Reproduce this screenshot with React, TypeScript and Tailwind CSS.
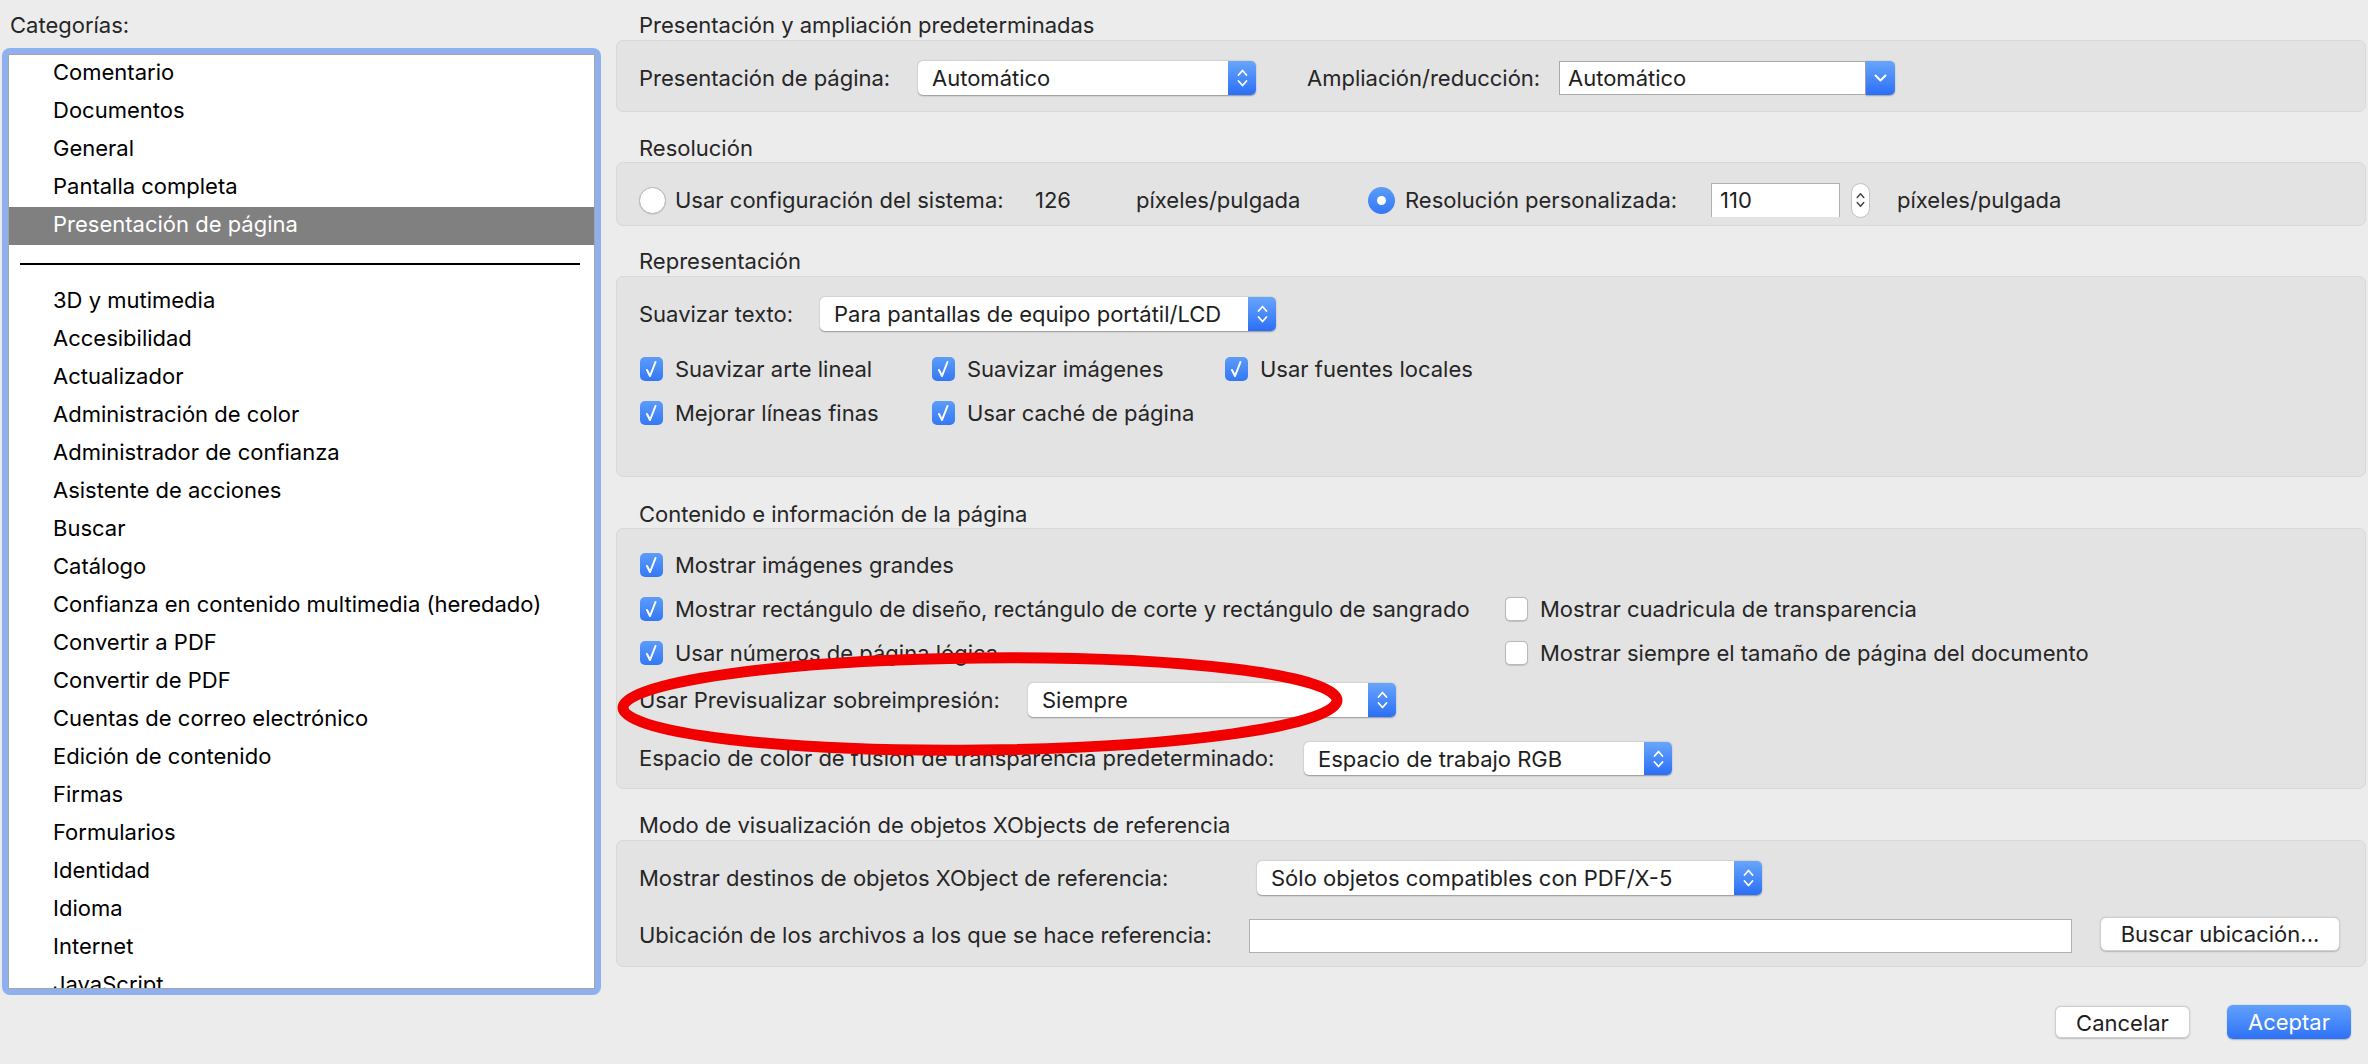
import React from 'react';

const categoriesTop = ['Comentario', 'Documentos', 'General', 'Pantalla completa', 'Presentación de página'];
const categoriesRest = [
  '3D y mutimedia',
  'Accesibilidad',
  'Actualizador',
  'Administración de color',
  'Administrador de confianza',
  'Asistente de acciones',
  'Buscar',
  'Catálogo',
  'Confianza en contenido multimedia (heredado)',
  'Convertir a PDF',
  'Convertir de PDF',
  'Cuentas de correo electrónico',
  'Edición de contenido',
  'Firmas',
  'Formularios',
  'Identidad',
  'Idioma',
  'Internet',
  'JavaScript',
];

function UpDown({ color = 'white', w = 11 }: { color?: string; w?: number }) {
  return (
    <svg width={w} height="20" viewBox="0 0 11 20" fill="none">
      <path d="M1.5 7 L5.5 2.5 L9.5 7" stroke={color} strokeWidth="1.8" strokeLinecap="round" strokeLinejoin="round" />
      <path d="M1.5 13 L5.5 17.5 L9.5 13" stroke={color} strokeWidth="1.8" strokeLinecap="round" strokeLinejoin="round" />
    </svg>
  );
}

function PopUp({ value, width, height = 34 }: { value: string; width: number; height?: number }) {
  return (
    <div
      className="flex shrink-0 rounded-[5px] bg-white shadow-[0_0.5px_1.5px_rgba(0,0,0,0.35)] overflow-hidden"
      style={{ width, height }}
    >
      <div className="flex-1 flex items-center pl-[14px] text-[22px] text-[#1e1e1e] leading-none">{value}</div>
      <div className="w-[28px] flex items-center justify-center bg-gradient-to-b from-[#68a5fb] to-[#2b6ef6]">
        <UpDown />
      </div>
    </div>
  );
}

function Combo({ value, width }: { value: string; width: number }) {
  return (
    <div className="flex shrink-0 h-[34px]" style={{ width }}>
      <div className="flex-1 flex items-center pl-[8px] bg-white border border-[#a9a9a9] text-[22px] text-[#1e1e1e] leading-none">
        {value}
      </div>
      <div className="w-[29px] flex items-center justify-center rounded-r-[5px] bg-gradient-to-b from-[#68a5fb] to-[#2b6ef6] shadow-[0_0.5px_1.5px_rgba(0,0,0,0.3)]">
        <svg width="13" height="8" viewBox="0 0 13 8" fill="none">
          <path d="M1.5 1.5 L6.5 6.5 L11.5 1.5" stroke="white" strokeWidth="2" strokeLinecap="round" strokeLinejoin="round" />
        </svg>
      </div>
    </div>
  );
}

function Check({ checked, label }: { checked: boolean; label: string }) {
  return (
    <div className="flex items-center h-[34px]">
      {checked ? (
        <div className="w-[23px] h-[24px] shrink-0 rounded-[5px] bg-gradient-to-b from-[#5c9cf9] to-[#3477f5] flex items-center justify-center">
          <svg width="23" height="24" viewBox="0 0 23 24" fill="none">
            <path d="M7 13 L10 19 L15.5 5" stroke="white" strokeWidth="2" strokeLinecap="round" strokeLinejoin="round" />
          </svg>
        </div>
      ) : (
        <div className="w-[23px] h-[24px] shrink-0 rounded-[5px] bg-white border border-[#b9b9b9] shadow-[0_0.5px_1px_rgba(0,0,0,0.15)]" />
      )}
      <span className="ml-[12px] whitespace-nowrap">{label}</span>
    </div>
  );
}

function Radio({ checked }: { checked: boolean }) {
  return checked ? (
    <div className="w-[27px] h-[27px] shrink-0 rounded-full bg-gradient-to-b from-[#5c9cf9] to-[#3477f5] flex items-center justify-center">
      <div className="w-[9px] h-[9px] rounded-full bg-white" />
    </div>
  ) : (
    <div className="w-[27px] h-[27px] shrink-0 rounded-full bg-white border border-[#b5b5b5] shadow-[0_0.5px_1px_rgba(0,0,0,0.15)]" />
  );
}

function Panel({ children, height, className = '' }: { children: React.ReactNode; height: number; className?: string }) {
  return (
    <div
      className={`rounded-[7px] bg-[#e3e3e3] border border-[#d8d8d8] pl-[22px] ${className}`}
      style={{ height }}
    >
      {children}
    </div>
  );
}

function Title({ text, h }: { text: string; h: number }) {
  return (
    <div className="pl-[23px] leading-[26px] whitespace-nowrap" style={{ height: h }}>
      {text}
    </div>
  );
}

export default function App() {
  return (
    <div className="relative w-[2368px] h-[1064px] overflow-hidden bg-[#ececec] text-[22px] text-[#262626] font-[Inter,'Liberation_Sans',sans-serif] flex">
      {/* categories */}
      <div className="w-[616px] shrink-0">
        <div className="pl-[10px] pt-[12px] leading-[26px] h-[48px]">Categorías:</div>
        <div className="ml-[2px] w-[599px] h-[947px] rounded-[8px] bg-[#8fb0ef] p-[6px]">
          <div className="h-full bg-white border border-[#a5a5a5] overflow-hidden text-black">
            {categoriesTop.map((c, i) => (
              <div
                key={c}
                className={`h-[38px] leading-[34px] pl-[44px] whitespace-nowrap ${
                  i === 4 ? 'bg-[#808080] text-white' : ''
                }`}
              >
                {c}
              </div>
            ))}
            <div className="h-[38px] flex items-center">
              <div className="ml-[11px] w-[560px] h-[2px] bg-black" />
            </div>
            {categoriesRest.map((c) => (
              <div key={c} className="h-[38px] leading-[34px] pl-[44px] whitespace-nowrap">
                {c}
              </div>
            ))}
          </div>
        </div>
      </div>

      {/* settings */}
      <div className="w-[1750px] shrink-0 pt-[12px]">
        <Title text="Presentación y ampliación predeterminadas" h={28} />
        <Panel height={72} className="pt-[20px]">
          <div className="flex items-center h-[34px]">
            <span className="w-[279px] shrink-0">Presentación de página:</span>
            <PopUp value="Automático" width={338} />
            <span className="ml-[51px] w-[252px] shrink-0">Ampliación/reducción:</span>
            <Combo value="Automático" width={336} />
          </div>
        </Panel>

        <div className="mt-[23px]">
          <Title text="Resolución" h={27} />
          <Panel height={64} className="pt-[20px]">
            <div className="flex items-center h-[34px] whitespace-nowrap">
              <Radio checked={false} />
              <span className="ml-[9px] w-[360px] shrink-0">Usar configuración del sistema:</span>
              <span className="w-[101px] shrink-0">126</span>
              <span className="w-[232px] shrink-0">píxeles/pulgada</span>
              <Radio checked />
              <span className="ml-[10px] w-[306px] shrink-0">Resolución personalizada:</span>
              <div className="w-[129px] h-[34px] shrink-0 bg-white border-t border-l border-r border-[#b0b0b0] flex items-center pl-[8px] text-[#1e1e1e]">
                110
              </div>
              <div className="ml-[11px] w-[19px] h-[35px] shrink-0 rounded-full bg-white border border-[#c2c2c2] flex items-center justify-center">
                <UpDown color="#444" w={9} />
              </div>
              <span className="ml-[27px]">píxeles/pulgada</span>
            </div>
          </Panel>
        </div>

        <div className="mt-[22px]">
          <Title text="Representación" h={28} />
          <Panel height={201} className="pt-[20px]">
            <div className="flex items-center h-[34px]">
              <span className="w-[181px] shrink-0">Suavizar texto:</span>
              <PopUp value="Para pantallas de equipo portátil/LCD" width={456} />
            </div>
            <div className="mt-[21px] pl-[1px] grid grid-cols-[292px_293px_400px] gap-y-[10px]">
              <Check checked label="Suavizar arte lineal" />
              <Check checked label="Suavizar imágenes" />
              <Check checked label="Usar fuentes locales" />
              <Check checked label="Mejorar líneas finas" />
              <Check checked label="Usar caché de página" />
            </div>
          </Panel>
        </div>

        <div className="mt-[24px]">
          <Title text="Contenido e información de la página" h={27} />
          <Panel height={261} className="pt-[19px]">
            <div className="pl-[1px] grid grid-cols-[865px_700px] gap-y-[10px]">
              <Check checked label="Mostrar imágenes grandes" />
              <div />
              <Check checked label="Mostrar rectángulo de diseño, rectángulo de corte y rectángulo de sangrado" />
              <Check checked={false} label="Mostrar cuadricula de transparencia" />
              <Check checked label="Usar números de página lógica" />
              <Check checked={false} label="Mostrar siempre el tamaño de página del documento" />
            </div>
            <div className="mt-[13px] flex items-center h-[34px]">
              <span className="w-[389px] shrink-0 whitespace-nowrap">Usar Previsualizar sobreimpresión:</span>
              <PopUp value="Siempre" width={368} />
            </div>
            <div className="mt-[25px] flex items-center h-[33px]">
              <span className="w-[665px] shrink-0 whitespace-nowrap">Espacio de color de fusión de transparencia predeterminado:</span>
              <PopUp value="Espacio de trabajo RGB" width={368} height={33} />
            </div>
          </Panel>
        </div>

        <div className="mt-[23px]">
          <Title text="Modo de visualización de objetos XObjects de referencia" h={28} />
          <Panel height={127} className="pt-[20px]">
            <div className="flex items-center h-[34px]">
              <span className="w-[618px] shrink-0 whitespace-nowrap">Mostrar destinos de objetos XObject de referencia:</span>
              <PopUp value="Sólo objetos compatibles con PDF/X-5" width={505} />
            </div>
            <div className="mt-[22px] flex items-center h-[36px]">
              <span className="w-[610px] shrink-0 whitespace-nowrap">Ubicación de los archivos a los que se hace referencia:</span>
              <div className="w-[823px] h-[34px] mt-[2px] shrink-0 bg-white border border-[#b0b0b0]" />
              <button className="ml-[28px] w-[240px] h-[34px] shrink-0 -mt-[2px] rounded-[6px] bg-white border border-[#cfcfcf] shadow-[0_0.5px_1.5px_rgba(0,0,0,0.2)] text-[#1e1e1e]">
                Buscar ubicación...
              </button>
            </div>
          </Panel>
        </div>

        <div className="mt-[38px] h-[34px] flex items-center justify-end pr-[15px]">
          <button className="w-[135px] h-[32px] rounded-[6px] bg-white border border-[#cfcfcf] shadow-[0_0.5px_1.5px_rgba(0,0,0,0.2)] text-[#1e1e1e]">
            Cancelar
          </button>
          <button className="ml-[37px] w-[124px] h-[34px] rounded-[6px] bg-gradient-to-b from-[#62a0fb] to-[#2d71f6] text-white shadow-[0_0.5px_1.5px_rgba(0,0,0,0.25)]">
            Aceptar
          </button>
        </div>
      </div>

      {/* red annotation ellipse */}
      <svg className="absolute left-0 top-0 pointer-events-none" width="2368" height="1064" viewBox="0 0 2368 1064">
        <ellipse cx="980" cy="704" rx="357" ry="46" fill="none" stroke="#f20000" strokeWidth="11" transform="rotate(-0.6 980 704)" />
      </svg>
    </div>
  );
}
